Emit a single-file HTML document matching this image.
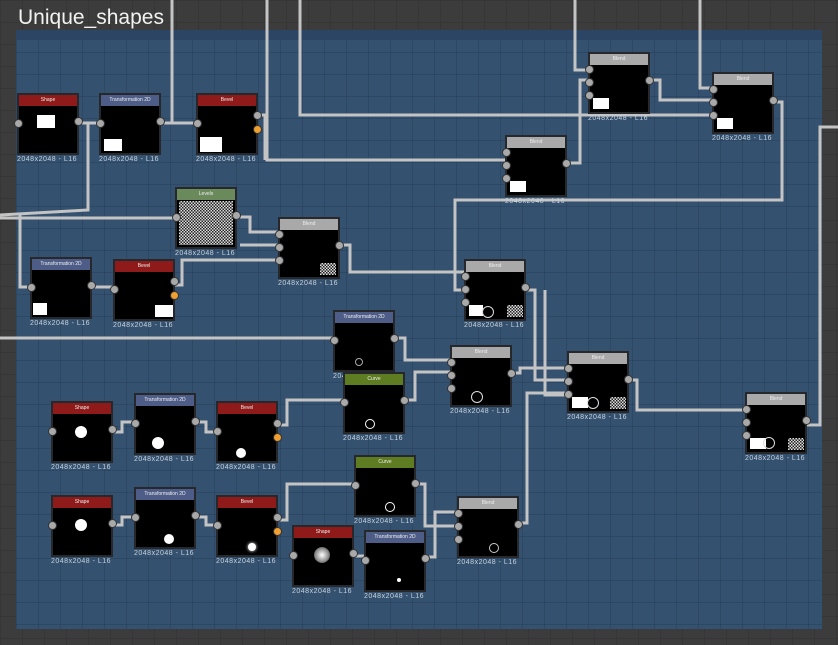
<!DOCTYPE html>
<html><head><style>
html,body{margin:0;padding:0;}
body{width:838px;height:645px;position:relative;overflow:hidden;background:#3c3c3c;
background-image:linear-gradient(#363636 1px,transparent 1px),linear-gradient(90deg,#363636 1px,transparent 1px);background-size:22px 22px;font-family:"Liberation Sans",sans-serif;}
#frame{position:absolute;left:16px;top:30px;width:806px;height:599px;background:#34516f;
background-image:linear-gradient(rgba(30,50,80,.3) 1px,transparent 1px),linear-gradient(90deg,rgba(30,50,80,.3) 1px,transparent 1px);background-size:22px 22px;}
#bar{position:absolute;left:16px;top:30px;width:806px;height:10px;background:#2c4564;}
#title{position:absolute;left:18px;top:6px;color:#f2f2f2;font-size:21px;}
svg{position:absolute;left:0;top:0;}
.n{position:absolute;width:58px;height:58px;background:#000;border:2px solid #26282c;}
.h{height:11px;font-size:5px;color:#eee;text-align:center;line-height:11px;}
.lab{position:absolute;font-size:7px;color:#c8d2dc;letter-spacing:.5px;white-space:nowrap;}
.p{position:absolute;width:7px;height:7px;border-radius:50%;background:#a9a9a9;border:1px solid #333;}
.o{background:#f0a030;}
.sq{position:absolute;background:#fff;}
.noise{position:absolute;background:repeating-conic-gradient(#ddd 0 25%,#222 0 50%) 0 0/3px 3px;}
</style></head><body>
<div id="frame"></div><div id="bar"></div>
<div id="title">Unique_shapes</div>
<svg width="838" height="645" fill="none" stroke="#c4c4c4" stroke-width="3">
<polyline points="172,0 172,123 196,123"/>
<polyline points="267,0 267,160 505,160"/>
<polyline points="300,0 300,115 712,115"/>
<polyline points="575,0 575,70 588,70"/>
<polyline points="700,0 700,88 712,88"/>
<polyline points="77,123 99,123"/>
<polyline points="159,123 196,123"/>
<polyline points="88,123 88,210 0,215"/>
<polyline points="20,215 20,287 30,287"/>
<polyline points="256,115 265,115 265,160"/>
<polyline points="648,80 660,80 660,100 712,100"/>
<polyline points="565,163 580,163 580,80 588,80"/>
<polyline points="772,102 782,102 782,200 455,200 455,290 464,290"/>
<polyline points="0,218 175,218"/>
<polyline points="235,217 250,217 250,232 278,232"/>
<polyline points="240,245 278,245"/>
<polyline points="338,245 350,245 350,272 464,272"/>
<polyline points="90,287 100,287 113,287"/>
<polyline points="173,285 182,285 182,260 278,260"/>
<polyline points="0,338 333,338"/>
<polyline points="393,338 405,338 405,360 450,360"/>
<polyline points="403,400 415,400 415,372 450,372"/>
<polyline points="510,373 520,373 520,368 567,368"/>
<polyline points="524,290 535,290 535,380 567,380"/>
<polyline points="545,290 545,395 567,395"/>
<polyline points="838,127 820,127 820,425 805,425"/>
<polyline points="627,380 637,380 637,410 745,410"/>
<polyline points="517,523 527,523 527,393 567,393"/>
<polyline points="111,432 122,432 122,422 134,422"/>
<polyline points="194,422 206,422 206,432 216,432"/>
<polyline points="276,425 287,425 287,400 343,400"/>
<polyline points="111,525 122,525 122,517 134,517"/>
<polyline points="194,517 206,517 206,525 216,525"/>
<polyline points="276,520 287,520 287,484 354,484"/>
<polyline points="414,484 425,484 425,526 457,526"/>
<polyline points="352,556 364,556"/>
<polyline points="424,557 435,557 435,512 457,512"/>
</svg>
<div id="nodes"></div>
<script>
var R='#8e1a1a',T='#4e5c88',B='#a9a9a9',G='#6b8a5c',C='#5e7c22';
var N=[
[17,93,R,'Shape',1,1,[['sq',18,20,18,13]]],
[99,93,T,'Transformation 2D',1,1,[['sq',3,44,18,12]]],
[196,93,R,'Bevel',1,2,[['sq',2,42,22,15]]],
[588,52,B,'Blend',3,1,[['sq',3,44,16,11]]],
[712,72,B,'Blend',3,1,[['sq',3,44,16,11]]],
[505,135,B,'Blend',3,1,[['sq',3,44,16,11]]],
[175,187,G,'Levels',1,1,[['noise',2,12,54,44]]],
[278,217,B,'Blend',3,1,[['noise',40,44,16,12]]],
[30,257,T,'Transformation 2D',1,1,[['sq',1,44,14,12]]],
[113,259,R,'Bevel',1,2,[['sq',40,44,18,12]]],
[464,259,B,'Blend',3,1,[['sq',3,44,14,11],['noise',41,44,16,12]]],
[333,310,T,'Transformation 2D',1,1,[]],
[450,345,B,'Blend',3,1,[]],
[343,372,C,'Curve',1,1,[]],
[567,351,B,'Blend',3,1,[['sq',3,44,16,11],['noise',41,44,16,12]]],
[745,392,B,'Blend',3,1,[['sq',3,44,16,11],['noise',41,44,16,12]]],
[51,401,R,'Shape',1,1,[]],
[134,393,T,'Transformation 2D',1,1,[]],
[216,401,R,'Bevel',1,2,[]],
[354,455,C,'Curve',1,1,[]],
[457,496,B,'Blend',3,1,[]],
[51,495,R,'Shape',1,1,[]],
[134,487,T,'Transformation 2D',1,1,[]],
[216,495,R,'Bevel',1,2,[]],
[292,525,R,'Shape',1,1,[]],
[364,530,T,'Transformation 2D',1,1,[]]
];
var h='';
N.forEach(function(n){
 var x=n[0],y=n[1];
 h+='<div class="n" style="left:'+x+'px;top:'+y+'px"><div class="h" style="background:'+n[2]+'">'+n[3]+'</div>';
 n[6].forEach(function(s){h+='<div class="'+s[0]+'" style="left:'+s[1]+'px;top:'+s[2]+'px;width:'+s[3]+'px;height:'+s[4]+'px"></div>';});
 h+='</div>';
 h+='<div class="lab" style="left:'+x+'px;top:'+(y+63)+'px">2048x2048 - L16</div>';
 var ys=n[4]==1?[30]:[17,30,43];
 ys.forEach(function(d){h+='<div class="p" style="left:'+(x-3)+'px;top:'+(y+d-4)+'px"></div>';});
 h+='<div class="p" style="left:'+(x+57)+'px;top:'+(y+(n[5]==2?22:28)-4)+'px"></div>';
 if(n[5]==2)h+='<div class="p o" style="left:'+(x+57)+'px;top:'+(y+32)+'px"></div>';
});
function dot(x,y,r,st){h+='<div style="position:absolute;left:'+(x-r)+'px;top:'+(y-r)+'px;width:'+(2*r)+'px;height:'+(2*r)+'px;border-radius:50%;'+st+'"></div>';}
dot(81,432,6,'background:#fff');dot(158,443,6,'background:#fff');dot(241,453,5,'background:#fff');
dot(81,525,6,'background:#fff');dot(169,539,5,'background:#fff');dot(252,547,4,'background:#fff;box-shadow:0 0 3px #fff');
dot(322,555,8,'background:radial-gradient(#fff,#888 60%,#000)');dot(399,580,2,'background:#fff');
dot(369,423,4,'border:1.5px solid #fff');dot(389,506,4,'border:1.5px solid #fff');dot(493,547,4,'border:1.5px solid #ccc');
dot(476,396,5,'border:1.5px solid #ddd');dot(592,402,5,'border:1.5px solid #ddd');dot(768,442,5,'border:1.5px solid #ddd');dot(487,311,5,'border:1.5px solid #ddd');
dot(358,361,3,'border:1px solid #aaa');
document.getElementById('nodes').innerHTML=h;
</script>
</body></html>
